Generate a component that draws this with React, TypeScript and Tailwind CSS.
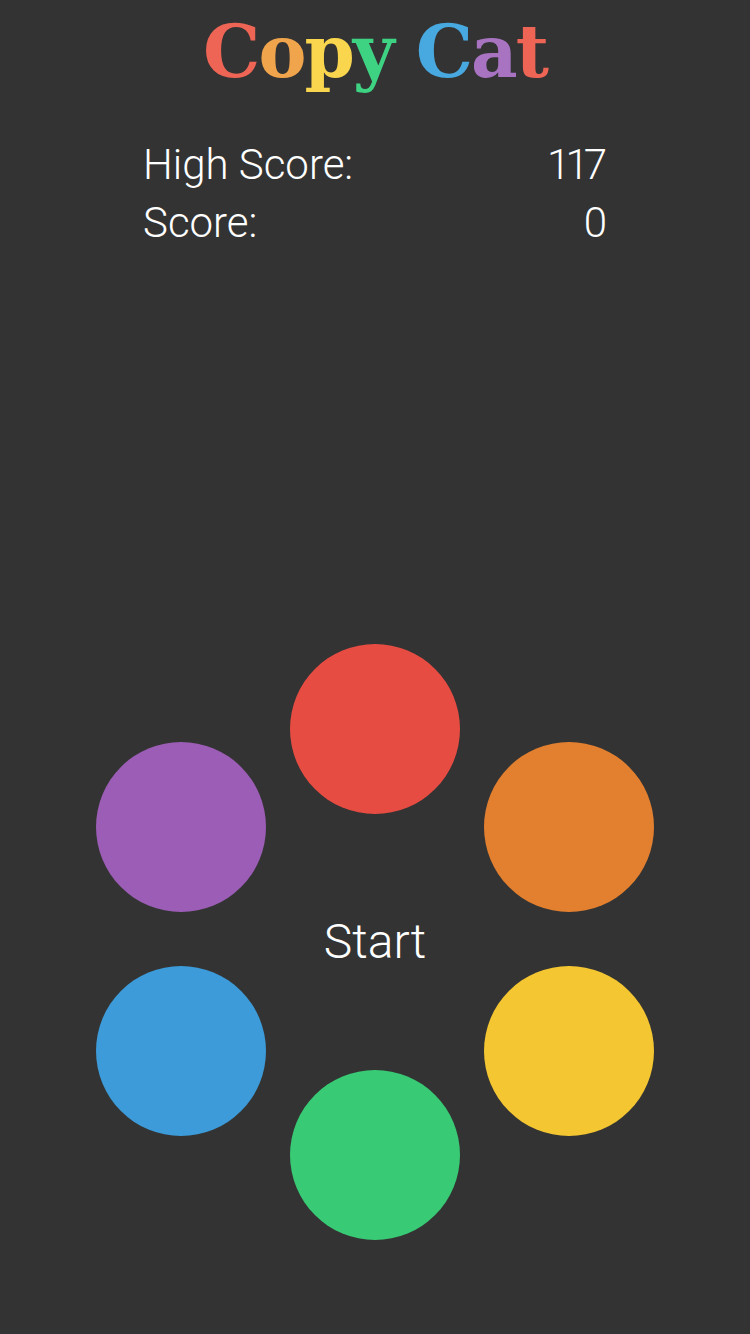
import React from "react";

const titleLetters: { ch: string; cls: string }[] = [
  { ch: "C", cls: "text-[#ee6555]" },
  { ch: "o", cls: "text-[#f0a44b]" },
  { ch: "p", cls: "text-[#f9d64e]" },
  { ch: "y", cls: "text-[#3ed283]" },
  { ch: " ", cls: "" },
  { ch: "C", cls: "text-[#48a9e0]" },
  { ch: "a", cls: "text-[#a874c2]" },
  { ch: "t", cls: "text-[#ee6555]" },
];

const circles = [
  { cls: "bg-[#e74c43] left-[194px] top-[0px]" },
  { cls: "bg-[#e38030] left-[388px] top-[98px]" },
  { cls: "bg-[#f3c632] left-[388px] top-[322px]" },
  { cls: "bg-[#38ca74] left-[194px] top-[426px]" },
  { cls: "bg-[#3c9bd8] left-[0px] top-[322px]" },
  { cls: "bg-[#9b5db5] left-[0px] top-[98px]" },
];

export default function App() {
  return (
    <div className="w-[750px] h-[1334px] bg-[#333333] flex flex-col items-center text-white font-['Roboto',sans-serif]">
      <h1 className="mt-[2px] h-[104px] text-[72px] leading-[100px] font-bold font-['DejaVu_Serif',serif] tracking-[-2px] whitespace-pre">
        {titleLetters.map((l, i) => (
          <span key={i} className={l.cls}>
            {l.ch}
          </span>
        ))}
      </h1>
      <div className="mt-[30px] w-[464px] flex flex-col font-light text-[42px] leading-[58px]">
        <div className="flex justify-between">
          <span>High Score:</span>
          <span className="tracking-[-5px] pr-[5px]">117</span>
        </div>
        <div className="flex justify-between">
          <span>Score:</span>
          <span>0</span>
        </div>
      </div>
      <div className="relative mt-[392px] w-[558px] h-[596px]">
        {circles.map((c, i) => (
          <button key={i} className={`absolute w-[170px] h-[170px] rounded-full ${c.cls}`} />
        ))}
        <div className="absolute left-0 right-0 top-[270px] text-center font-light text-[48px] leading-[56px]">
          Start
        </div>
      </div>
    </div>
  );
}
